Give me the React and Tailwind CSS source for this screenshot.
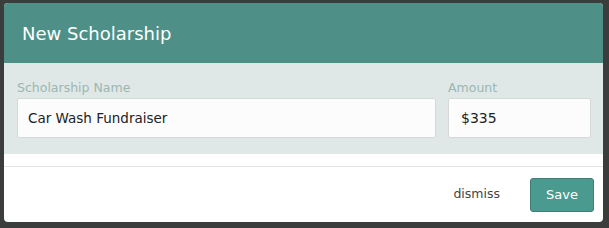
export default function App() {
  return (
    <div className="w-[609px] h-[228px] bg-[#3b3c3c] pt-[3px] pl-[4px]" style={{ fontFamily: '"DejaVu Sans", Verdana, sans-serif' }}>
      <div className="w-[599px] h-[219px] bg-white rounded-[4px] overflow-hidden flex flex-col">
        <div className="h-[60px] bg-[#4e8f87] flex items-center pl-[18px]">
          <h1 className="text-[18px] text-white">New Scholarship</h1>
        </div>
        <div className="h-[91px] bg-[#dfe8e6] flex gap-[12px] pl-[13px] pr-[12px] pt-[15px]">
          <div className="w-[419px] flex flex-col">
            <label className="text-[12.5px] text-[#9cb6b2] h-[20px] leading-[20px]">Scholarship Name</label>
            <input
              readOnly
              value="Car Wash Fundraiser"
              className="h-[40px] w-full bg-[#fcfcfc] border border-[#d3dad8] rounded-[2px] px-[10px] text-[13.5px] text-[#222] outline-none"
            />
          </div>
          <div className="w-[143px] flex flex-col">
            <label className="text-[12.5px] text-[#9cb6b2] h-[20px] leading-[20px]">Amount</label>
            <input
              readOnly
              value="$335"
              className="h-[40px] w-full bg-[#fcfcfc] border border-[#d3dad8] rounded-[2px] px-[12px] text-[14px] text-[#222] outline-none"
            />
          </div>
        </div>
        <div className="h-[12px]" />
        <div className="border-t border-[#e5e5e5] flex-1 flex items-center justify-end pr-[9px] gap-[30px]">
          <span className="text-[12.5px] text-[#444]">dismiss</span>
          <button className="w-[64px] h-[34px] rounded-[3px] border border-[#3d7d75] bg-[#4b9a90] text-white text-[13px]">Save</button>
        </div>
      </div>
    </div>
  );
}
